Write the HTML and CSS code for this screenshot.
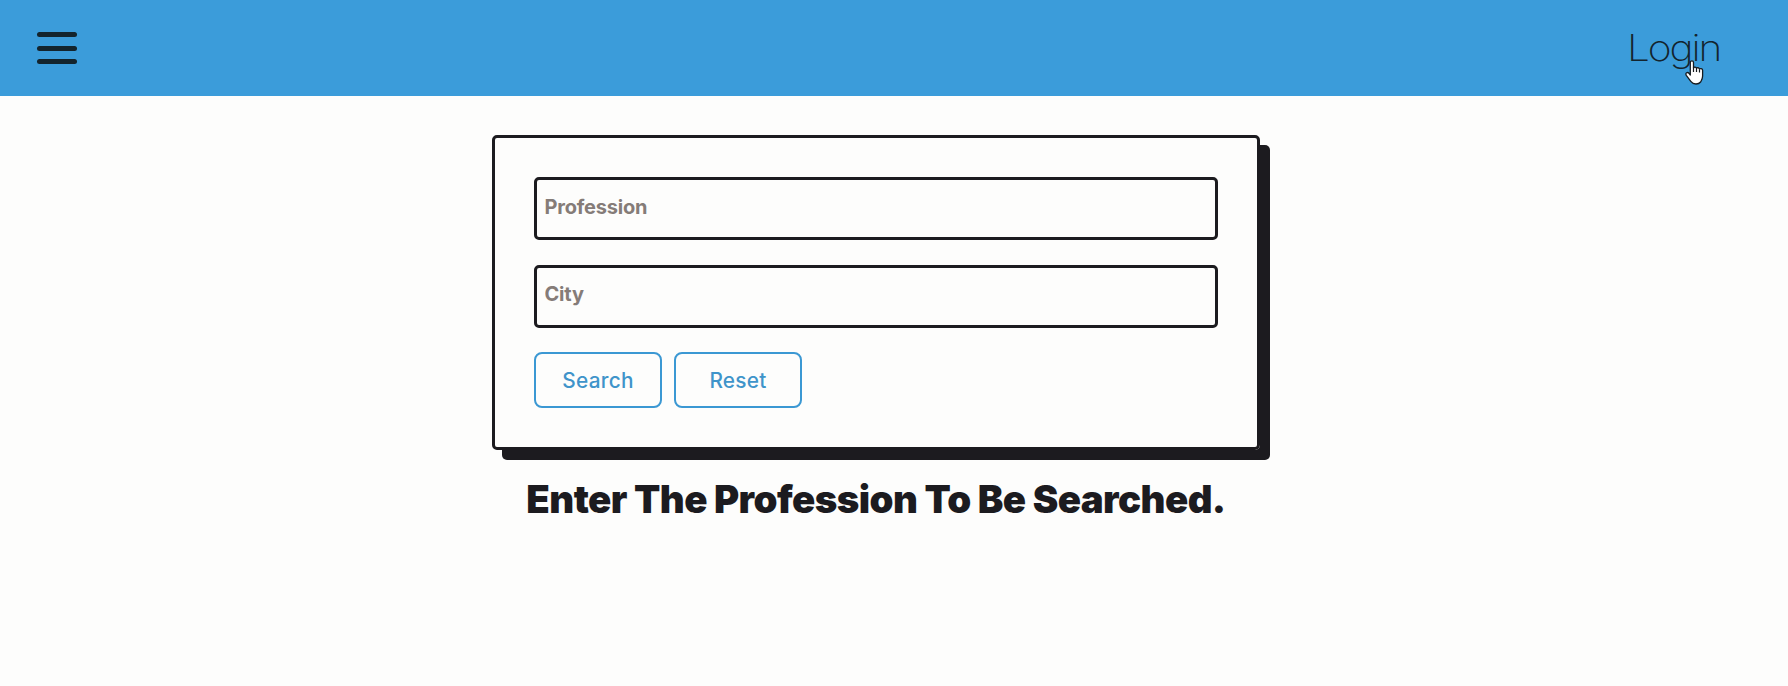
FILE: index.html
```html
<!DOCTYPE html>
<html lang="en">
<head>
<meta charset="utf-8">
<title>Profession Search</title>
<link rel="stylesheet" href="styles.css">
</head>
<body>
<header class="navbar">
  <button class="menu" aria-label="Menu"><span class="bar"></span><span class="bar"></span><span class="bar"></span></button>
  <a class="login"><span class="login-text">Login</span>
    <svg class="pointer" width="19" height="25" viewBox="0 0 19 25" aria-hidden="true"><path d="M5.3 2.5C5.3.3 8.5.3 8.5 2.5V8c.3-1.3 2.8-1.2 3 .4.5-1.1 2.8-.9 3 .7.7-1 3.1-.6 3.1 1.2V16c0 3-1 4.200-2 6-1.200 1.500-2.900 2-4.600 2-2.500 0-4-.9-5.200-2.600L1.300 15.400C0 13 2.500 11.600 4 13.300L5.300 15Z" fill="#fff" stroke="#151b20" stroke-width="1.300" stroke-linejoin="round"/><path d="M8.500 7.500v4.500M11.500 8.500v3.500M14.500 9.500v3" fill="none" stroke="#151b20" stroke-width="1.200"/></svg>
  </a>
</header>
<main class="content">
  <form class="card">
    <input class="field" type="text" placeholder="Profession">
    <input class="field field-city" type="text" placeholder="City">
    <div class="actions">
      <button class="btn" type="button">Search</button>
      <button class="btn" type="button">Reset</button>
    </div>
  </form>
  <h1 class="prompt">Enter The Profession To Be Searched.</h1>
</main>
</body>
</html>
```
FILE: styles.css
```css
* { box-sizing: border-box; }
body {
  margin: 0;
  min-height: 686px;
  background: #fdfdfc;
  color: #1c1b1f;
  font-family: Inter, "Liberation Sans", sans-serif;
}
.navbar {
  display: flex;
  justify-content: space-between;
  align-items: center;
  height: 96px;
  padding: 0 66px 0 37px;
  background: #3b9cda;
}
.menu {
  display: flex;
  flex-direction: column;
  gap: 8.500px;
  width: 40px;
  padding: 0;
  border: 0;
  background: none;
}
.bar {
  height: 5px;
  border-radius: 3px;
  background: #13242d;
}
.login {
  position: relative;
  width: 95px;
  color: #13242d;
  font-size: 36px;
  font-weight: 250;
  line-height: 44px;
}
.login-text {
  display: inline-block;
  letter-spacing: -1.900px;
  transform: scaleX(1.130);
  transform-origin: left;
}
.pointer {
  position: absolute;
  left: 58px;
  top: 34px;
}
.content {
  display: flex;
  flex-direction: column;
  align-items: center;
  padding: 39px 36px 0 0;
}
.card {
  width: 768px;
  height: 315px;
  padding: 39px;
  border: 3px solid #1c1b1f;
  border-radius: 5px;
  box-shadow: 10px 10px 0 #1c1b1f;
}
.field {
  display: block;
  width: 684px;
  height: 63px;
  margin: 0 0 25px;
  padding: 0 8px 3px 7.500px;
  border: 3px solid #1c1b1f;
  border-radius: 5px;
  background: none;
  font-family: inherit;
  font-size: 20px;
  font-weight: 700;
  letter-spacing: -.2px;
}
.field-city { margin-bottom: 24px; padding-bottom: 5px; }
.field::placeholder { color: #857c78; opacity: 1; }
.actions { display: flex; gap: 12px; }
.btn {
  width: 128px;
  height: 56px;
  padding: 0;
  border: 2px solid #3b98d3;
  border-radius: 8px;
  background: none;
  color: #3f94ca;
  font-family: inherit;
  font-size: 20.800px;
  font-weight: 450;
  letter-spacing: .25px;
}
.prompt {
  margin: 26px 0 0;
  font-size: 38.400px;
  font-weight: 900;
  letter-spacing: -.560px;
  line-height: 46px;
  white-space: nowrap;
}
```
